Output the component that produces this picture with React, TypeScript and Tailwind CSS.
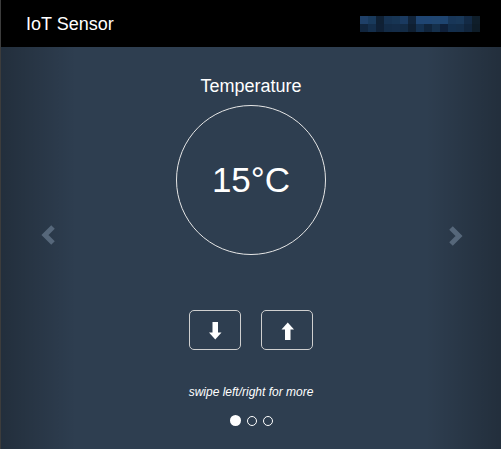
const ROW1 = ['#1f4068','#193a5c','#0f2033','#163251','#173554','#1a3a60','#11243a','#1f4572','#1f4572','#204670','#1e4470','#183658','#193859','#132a45','#0f1e2a']
const ROW2 = ['#11253d','#142e4b','#0f2035','#132b46','#142c48','#132b45','#0f1f31','#14304f','#10243b','#15304c','#0f203a','#132e4c','#142d49','#11253c','#0e1c27']

function Chevron({ dir }: { dir: 'left' | 'right' }) {
  const pts = dir === 'left' ? '12,2 4,10 12,18' : '3,2 11,10 3,18'
  return (
    <svg width="15" height="20" viewBox="0 0 15 20">
      <polyline points={pts} fill="none" stroke="#56677a" strokeWidth="5" strokeLinejoin="miter" strokeLinecap="butt" />
    </svg>
  )
}

function Arrow({ up }: { up?: boolean }) {
  return (
    <svg width="13" height="18" viewBox="0 0 13 18" className={up ? 'rotate-180' : ''}>
      <rect x="3.5" y="0" width="5.5" height="11" fill="#fff" />
      <polygon points="0,10.5 12.5,10.5 6.25,17.5" fill="#fff" />
    </svg>
  )
}

export default function App() {
  return (
    <div className="w-[501px] h-[449px] flex flex-col border-l border-[#3c3c3c] font-['Liberation_Sans',Arial,sans-serif] text-white overflow-hidden">
      <div className="h-[47px] shrink-0 bg-black flex items-center pl-[25px] pr-[21px]">
        <span className="text-[18px] leading-none">IoT Sensor</span>
        <div className="ml-auto flex flex-col">
          <div className="flex">{ROW1.map((c, i) => <div key={i} className="w-[8px] h-[8px]" style={{ background: c }} />)}</div>
          <div className="flex">{ROW2.map((c, i) => <div key={i} className="w-[8px] h-[8px]" style={{ background: c }} />)}</div>
        </div>
      </div>

      <div className="flex-1 flex bg-[#2e3e50] bg-[linear-gradient(to_right,rgba(0,0,0,0.25),rgba(0,0,0,0)_15%,rgba(0,0,0,0)_85%,rgba(0,0,0,0.25))]">
        <div className="w-[75px] shrink-0 pl-[40px] pt-[178px]"><Chevron dir="left" /></div>

        <div className="flex-1 flex flex-col items-center">
          <div className="mt-[29px] text-[18px] leading-[20px]">Temperature</div>
          <div className="mt-[9px] w-[150px] h-[150px] rounded-full border border-[#e6e6e6] flex items-center justify-center">
            <span className="text-[35px] leading-none -mt-[2px]">15°C</span>
          </div>
          <div className="mt-[55px] flex gap-[20px]">
            <button className="w-[52px] h-[40px] rounded-[5px] border border-[#cfcfcf] flex items-center justify-center pt-[1px]"><Arrow /></button>
            <button className="w-[52px] h-[40px] rounded-[5px] border border-[#cfcfcf] flex items-center justify-center pt-[1px]"><Arrow up /></button>
          </div>
          <div className="mt-[34px] text-[12px] leading-[16px] italic">swipe left/right for more</div>
          <div className="mt-[15px] flex items-center gap-[6px]">
            <div className="w-[11px] h-[11px] rounded-full bg-white" />
            <div className="w-[10px] h-[10px] rounded-full border border-white" />
            <div className="w-[10px] h-[10px] rounded-full border border-white" />
          </div>
        </div>

        <div className="w-[75px] shrink-0 pl-[22px] pt-[179px]"><Chevron dir="right" /></div>
      </div>
    </div>
  )
}
